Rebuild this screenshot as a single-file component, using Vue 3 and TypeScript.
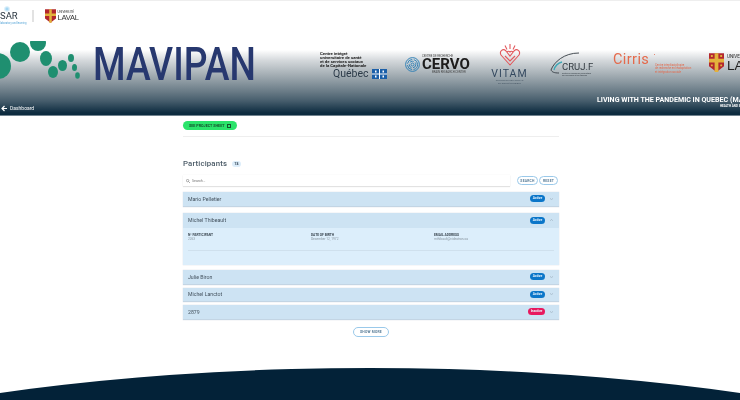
<template>
  <div class="page">
    <header class="topbar">
      <div class="brand-sar">
        <span class="sar-glow"></span>
        <span class="sar">SAR</span>
        <span class="sar-sub">laboratory and learning</span>
      </div>
      <span class="top-divider"></span>
      <svg class="shield" width="11" height="14" viewBox="0 0 13 16">
        <path d="M0 0h13v11l-6.5 5L0 11z" fill="#b3262e" />
        <path d="M5 0h3v16H5zM0 5h13v3H0z" fill="#e3b23c" />
      </svg>
      <div class="laval">
        <span class="laval-small">UNIVERSITÉ</span>
        <span class="laval-big">LAVAL</span>
      </div>
    </header>

    <section class="banner">
      <div class="banner-main">
        <svg class="dots" width="82" height="54" viewBox="0 0 82 54">
          <ellipse v-for="(d, i) in dots" :key="i" :cx="d.x" :cy="d.y" :rx="d.rx" :ry="d.ry" fill="#1f8f70" />
        </svg>
        <div class="mavipan">MAVIPAN</div>
        <div class="logos">
          <div class="logo-quebec">
            <span class="quebec-text">Centre intégré<br />universitaire de santé<br />et de services sociaux<br />de la Capitale-Nationale</span>
            <span class="quebec-name">Québec
              <svg width="15" height="10" viewBox="0 0 15 10">
                <rect width="15" height="10" fill="#1b5fa8" />
                <path d="M7 0h1v10H7zM0 4.500h15v1H0z" fill="#fff" />
                <path d="M3 1.500h1.500v2H3zM10.500 1.500H12v2h-1.500zM3 6.500h1.500v2H3zM10.500 6.500H12v2h-1.500z" fill="#fff" />
              </svg>
            </span>
          </div>
          <div class="logo-cervo">
            <svg width="15" height="15" viewBox="0 0 20 20" fill="none" stroke="#2f7fb5" stroke-width="1.3">
              <circle cx="10" cy="10" r="9.200" />
              <circle cx="10" cy="10" r="6.800" stroke-dasharray="9 2" />
              <circle cx="10" cy="10" r="4.400" stroke-dasharray="6 2" />
              <circle cx="10" cy="10" r="2" />
            </svg>
            <div class="cervo-words">
              <span class="cervo-top">CENTRE DE RECHERCHE</span>
              <span class="cervo-name">CERVO</span>
              <span class="cervo-bottom">BRAIN RESEARCH CENTER</span>
            </div>
          </div>
          <div class="logo-vitam">
            <svg width="22" height="22" viewBox="0 0 22 22" fill="none" stroke="#e2585c" stroke-width="1.100">
              <path d="M11 0v5M6 1.500l2 4M16 1.500l-2 4" />
              <path d="M11 21L2 11C0 7 4 4 7 7l4 5 4-5c3-3 7 0 5 4z" />
              <path d="M6 12l5 5 5-5M8 8c1-1 2-1 3 0 1-1 2-1 3 0" />
            </svg>
            <span class="vitam-name">VITAM</span>
            <span class="vitam-sub">CENTRE DE RECHERCHE<br />EN SANTÉ DURABLE</span>
          </div>
          <div class="logo-cruj">
            <svg class="cruj-arc" width="44" height="24" viewBox="0 0 44 24" fill="none" stroke="#333b42" stroke-width="0.900">
              <path d="M1 18C4 10 14 1 29 1" />
              <path d="M4 18C5 14 8 11 12 10" stroke="#3ba7b5" stroke-width="1.300" />
              <path d="M1 18c1 2 3 3 8 3" />
            </svg>
            <span class="cruj-name">CRUJ.F</span>
            <span class="cruj-sub">Centre de recherche universitaire<br />sur les jeunes et les familles</span>
          </div>
          <div class="logo-cirris">
            <span class="cirris-name">Cirris</span>
            <span class="cirris-dot"></span>
            <span class="cirris-sub">Centre interdisciplinaire<br />de recherche en réadaptation<br />et intégration sociale</span>
          </div>
          <div class="logo-ul">
            <svg width="15" height="19" viewBox="0 0 16 20">
              <path d="M0 0h16v14l-8 6-8-6z" fill="#b3262e" />
              <path d="M6 0h4v20H6zM0 6h16v4H0z" fill="#e3b23c" />
              <path d="M2 2h2v2H2zM12 2h2v2h-2zM2 12h2v2H2zM12 12h2v2h-2z" fill="#e3b23c" />
            </svg>
            <div class="ul-words">
              <span class="ul-small">UNIVERSITÉ</span>
              <span class="ul-big">LAVAL</span>
            </div>
          </div>
        </div>
      </div>
      <div class="banner-bottom">
        <a class="back">
          <svg width="6" height="7" viewBox="0 0 6 7" fill="none" stroke="#fff" stroke-width="1.200">
            <path d="M6 3.500H1M3.500 1L1 3.500 3.500 6" />
          </svg>
          Dashboard
        </a>
        <div class="project">
          <div class="project-title">LIVING WITH THE PANDEMIC IN QUEBEC (MAVIPAN)</div>
          <div class="project-sub">HEALTH AND SOCIAL</div>
        </div>
      </div>
    </section>

    <main class="content">
      <div class="sheet-row">
        <button class="sheet-btn">SEE PROJECT SHEET <span class="sheet-icon"></span></button>
      </div>

      <div class="participants-head">
        <h2>Participants</h2>
        <span class="count">74</span>
      </div>

      <div class="search-row">
        <div class="search-box">
          <svg width="4" height="4" viewBox="0 0 10 10" fill="none" stroke="#777" stroke-width="1.500">
            <circle cx="4" cy="4" r="3" />
            <path d="M6.500 6.500L10 10" />
          </svg>
          <span>Search...</span>
        </div>
        <button class="outline-btn">SEARCH</button>
        <button class="outline-btn">RESET</button>
      </div>

      <div v-for="p in participants" :key="p.name" class="item" :class="{ open: p.open }">
        <div class="item-head">
          <span class="item-name">{{ p.name }}</span>
          <span class="badge" :class="{ inactive: !p.active }">{{ p.active ? 'Active' : 'Inactive' }}</span>
          <svg class="chevron" width="3" height="2" viewBox="0 0 5 3" fill="none" stroke="#8a9aa8" stroke-width="0.800">
            <path :d="p.open ? 'M0 3l2.500-2.500L5 3' : 'M0 0.500l2.500 2L5 0.500'" />
          </svg>
        </div>
        <div v-if="p.open" class="item-body">
          <div class="fields">
            <div v-for="f in fields" :key="f.label" class="field">
              <div class="field-label">{{ f.label }}</div>
              <div class="field-value">{{ f.value }}</div>
            </div>
          </div>
          <div class="body-line"></div>
        </div>
      </div>

      <div class="more-row">
        <button class="outline-btn more">SHOW MORE</button>
      </div>
    </main>

    <footer class="footer"></footer>
  </div>
</template>

<script setup lang="ts">
interface Participant {
  name: string
  active: boolean
  open?: boolean
}

const dots = [
  { x: -2, y: 25, rx: 13, ry: 13 },
  { x: 20, y: 11, rx: 10, ry: 10 },
  { x: 38, y: 2, rx: 8, ry: 8 },
  { x: 46, y: 17.5, rx: 6, ry: 7.5 },
  { x: 53, y: 31, rx: 5, ry: 6 },
  { x: 62.5, y: 24.5, rx: 4.5, ry: 5.5 },
  { x: 71, y: 17, rx: 3, ry: 4 },
  { x: 74.5, y: 26.5, rx: 2.5, ry: 3.5 },
  { x: 77.5, y: 34.5, rx: 2.3, ry: 3.3 },
]

const fields = [
  { label: 'N° PARTICIPANT', value: '2263' },
  { label: 'DATE OF BIRTH', value: 'December 12, 1972' },
  { label: 'EMAIL ADDRESS', value: 'mthibault@videotron.ca' },
]

const participants: Participant[] = [
  { name: 'Mario Pelletier', active: true },
  { name: 'Michel Thibeault', active: true, open: true },
  { name: 'Julie Biron', active: true },
  { name: 'Michel Lanctot', active: true },
  { name: '2879', active: false },
]
</script>

<style>
html,
body {
  margin: 0;
  background: #fff;
  overflow: hidden;
}
</style>

<style scoped>
.page {
  position: relative;
  width: 740px;
  height: 400px;
  overflow: hidden;
  font-family: Roboto, "Liberation Sans", sans-serif;
  background: #fff;
  filter: blur(0.3px);
}

.topbar {
  height: 41px;
  box-sizing: border-box;
  border-top: 1px solid #eee;
  display: flex;
  align-items: flex-start;
  padding-top: 8px;
}

.brand-sar {
  position: relative;
  width: 24px;
  display: flex;
  flex-direction: column;
}

.sar-glow {
  position: absolute;
  left: 3px;
  top: -3px;
  width: 8px;
  height: 6px;
  border-radius: 50%;
  background: radial-gradient(circle, #8fcdf0 0%, rgba(143, 205, 240, 0) 70%);
}

.sar {
  font-size: 9.5px;
  line-height: 11px;
  margin-top: 1px;
  color: #2a3640;
}

.sar-sub {
  font-size: 2.6px;
  line-height: 4px;
  margin-top: 1px;
  color: #5aa7d8;
  white-space: nowrap;
}

.top-divider {
  width: 1.500px;
  height: 12px;
  margin: 1px 11px 0 8px;
  background: #e2e2e2;
}

.shield {
  margin-right: 2px;
}

.laval {
  display: flex;
  flex-direction: column;
  color: #333;
}

.laval-small {
  font-size: 3px;
  line-height: 4px;
  margin-top: 1px;
}

.laval-big {
  font-family: "Liberation Sans", sans-serif;
  font-size: 7.5px;
  line-height: 8px;
  letter-spacing: -0.2px;
}

.banner {
  height: 74px;
  background: linear-gradient(180deg, #fff 0%, #fff 12%, #d5d9dc 26%, #a3adb3 46%, #6d7e89 67%, #465d6c 81%, #0e2c40 97%, #0b2a3e 100%);
  border-bottom: 1px solid #71838f;
  display: flex;
  flex-direction: column;
  overflow: hidden;
}

.banner-main {
  height: 54px;
  display: flex;
  align-items: flex-start;
  flex: none;
}

.dots {
  flex: none;
}

.mavipan {
  flex: none;
  width: 227px;
  margin: 0 0 0 11px;
  font-size: 46px;
  line-height: 46px;
  font-weight: 500;
  color: #27386f;
  transform: scaleX(0.81);
  transform-origin: left center;
}

.logos {
  flex: none;
  display: flex;
  align-items: flex-start;
}

.logo-quebec {
  flex: none;
  width: 85px;
  margin-top: 11px;
  display: flex;
  flex-direction: column;
  color: #222;
}

.quebec-text {
  font-size: 4.300px;
  line-height: 4px;
  font-weight: 700;
  white-space: nowrap;
}

.quebec-name {
  font-size: 10.500px;
  line-height: 11px;
  margin-left: 13px;
  display: flex;
  align-items: center;
  gap: 3px;
  color: #2b3a48;
}

.logo-cervo {
  flex: none;
  width: 70px;
  margin-top: 14px;
  display: flex;
  align-items: center;
  gap: 2px;
}

.cervo-words {
  display: flex;
  flex-direction: column;
  color: #1c1c1c;
}

.cervo-top,
.cervo-bottom {
  font-size: 2.800px;
  line-height: 3px;
  white-space: nowrap;
  color: #444;
}

.cervo-bottom {
  margin-left: 10px;
}

.cervo-name {
  font-size: 15px;
  line-height: 13px;
  font-weight: 700;
}

.logo-vitam {
  flex: none;
  width: 41px;
  margin-left: 14px;
  margin-top: 3px;
  display: flex;
  flex-direction: column;
  align-items: center;
  text-align: center;
}

.vitam-name {
  font-size: 10.500px;
  line-height: 9px;
  margin-top: 3px;
  letter-spacing: 1px;
  color: #33485f;
}

.vitam-sub {
  font-size: 2.500px;
  line-height: 3px;
  margin-top: 1px;
  color: #4a5a68;
  white-space: nowrap;
}

.logo-cruj {
  position: relative;
  flex: none;
  width: 44px;
  height: 26px;
  margin-left: 20px;
  margin-top: 11px;
}

.cruj-arc {
  display: block;
}

.cruj-name {
  position: absolute;
  left: 12px;
  top: 10px;
  font-size: 9.500px;
  line-height: 10px;
  color: #333b42;
}

.cruj-sub {
  position: absolute;
  left: 12px;
  top: 20px;
  font-size: 2px;
  line-height: 2.200px;
  color: #333b42;
  white-space: nowrap;
}

.logo-cirris {
  position: relative;
  flex: none;
  width: 76px;
  margin-left: 19px;
  margin-top: 12px;
  display: flex;
  flex-direction: column;
}

.cirris-name {
  font-size: 14.500px;
  line-height: 14px;
  color: #e46a4c;
  letter-spacing: 0.400px;
}

.cirris-dot {
  position: absolute;
  left: 41px;
  top: 1px;
  width: 1px;
  height: 1px;
  border-radius: 50%;
  background: #e46a4c;
}

.cirris-sub {
  font-size: 2.800px;
  line-height: 3.400px;
  color: #e46a4c;
  margin-left: 42px;
  margin-top: -3px;
  white-space: nowrap;
}

.logo-ul {
  flex: none;
  margin-left: 20px;
  margin-top: 12px;
  display: flex;
  gap: 3px;
}

.ul-words {
  display: flex;
  flex-direction: column;
  color: #222;
}

.ul-small {
  font-size: 4.500px;
  line-height: 6px;
  margin-top: 1px;
}

.ul-big {
  font-family: "Liberation Sans", sans-serif;
  font-size: 13.500px;
  line-height: 11px;
}

.banner-bottom {
  flex: none;
  display: flex;
  justify-content: space-between;
  color: #fff;
}

.back {
  display: flex;
  align-items: center;
  gap: 3px;
  height: 16px;
  margin: 5px 0 0 1px;
  font-size: 5px;
}

.project {
  flex: none;
  width: 143px;
  margin-top: 0;
  overflow: hidden;
}

.project-title {
  font-size: 7.100px;
  line-height: 9px;
  font-weight: 700;
  white-space: nowrap;
}

.project-sub {
  font-size: 3px;
  line-height: 4px;
  font-weight: 700;
  margin-left: 123px;
  white-space: nowrap;
}

.content {
  width: 376px;
  margin-left: 183px;
}

.sheet-row {
  padding-top: 5px;
  height: 15px;
  border-bottom: 1px solid #eee;
}

.sheet-btn {
  display: flex;
  align-items: center;
  gap: 2px;
  height: 9px;
  width: 54px;
  padding: 0 0 0 6px;
  border: none;
  border-radius: 5px;
  background: #2be36b;
  color: #14532d;
  font-family: inherit;
  font-size: 3.700px;
  font-weight: 700;
  white-space: nowrap;
}

.sheet-icon {
  width: 2px;
  height: 2px;
  border: 0.500px solid #14532d;
}

.participants-head {
  display: flex;
  align-items: center;
  gap: 5px;
  margin-top: 21px;
  height: 12px;
}

.participants-head h2 {
  margin: 0;
  font-size: 7.800px;
  line-height: 12px;
  font-weight: 500;
  letter-spacing: 0.150px;
  color: #4a5a66;
}

.count {
  width: 9px;
  height: 6px;
  border-radius: 3px;
  background: #dcedfa;
  color: #345;
  font-size: 3.500px;
  line-height: 6px;
  font-weight: 700;
  text-align: center;
}

.search-row {
  display: flex;
  align-items: center;
  gap: 1px;
  margin-top: 5px;
  margin-bottom: 6px;
  padding-right: 1px;
}

.search-box {
  flex: 1;
  height: 11px;
  display: flex;
  align-items: center;
  gap: 2px;
  padding-left: 3px;
  margin-right: 6px;
  background: #fff;
  box-shadow: 0 1px 1px rgba(0, 0, 0, 0.1), 0 0 1px rgba(0, 0, 0, 0.08);
  font-size: 3.500px;
  color: #777;
}

.outline-btn {
  flex: none;
  height: 9px;
  padding: 0;
  width: 21px;
  border: 1px solid #9ac9ea;
  border-radius: 5px;
  background: #fff;
  color: #5a7d98;
  font-family: inherit;
  font-size: 3.400px;
  font-weight: 700;
  letter-spacing: 0.200px;
  box-sizing: border-box;
}

.outline-btn:nth-of-type(2) {
  width: 19px;
}

.item {
  margin-top: 3px;
  background: #dceefb;
  box-shadow: 0 0 1px rgba(120, 140, 160, 0.4);
}

.item.open {
  margin-top: 6.500px;
  margin-bottom: 5px;
}

.item-head {
  height: 14.500px;
  box-sizing: border-box;
  display: flex;
  align-items: center;
  padding: 0 5px;
  background: #cde3f3;
  border-bottom: 1px solid #c3d5e4;
}

.item.open .item-head {
  border-bottom: none;
}

.item-name {
  flex: 1;
  font-size: 5.200px;
  color: #44525e;
}

.badge {
  height: 7px;
  width: 15px;
  border-radius: 3.500px;
  background: #0b76c9;
  color: #e8f4fd;
  font-size: 3.300px;
  line-height: 7px;
  font-weight: 700;
  text-align: center;
}

.badge.inactive {
  width: 17px;
  background: #e8195e;
}

.chevron {
  margin-left: 5px;
  margin-right: 1px;
}

.item-body {
  height: 37.500px;
  box-sizing: border-box;
  padding: 5px 5px 0;
}

.fields {
  display: grid;
  grid-template-columns: 123px 123px 1fr;
}

.field-label {
  font-size: 3.300px;
  line-height: 4px;
  font-weight: 700;
  color: #3c4852;
}

.field-value {
  font-size: 3.200px;
  line-height: 4px;
  color: #87949e;
}

.body-line {
  height: 1px;
  margin-top: 9.500px;
  background: #cfe0ed;
}

.more-row {
  display: flex;
  justify-content: center;
  margin-top: 7.500px;
}

.outline-btn.more {
  width: 36px;
  height: 10px;
}

.footer {
  position: absolute;
  left: -430px;
  top: 368px;
  width: 1600px;
  height: 440px;
  border-radius: 50%;
  background: #032238;
}
</style>
